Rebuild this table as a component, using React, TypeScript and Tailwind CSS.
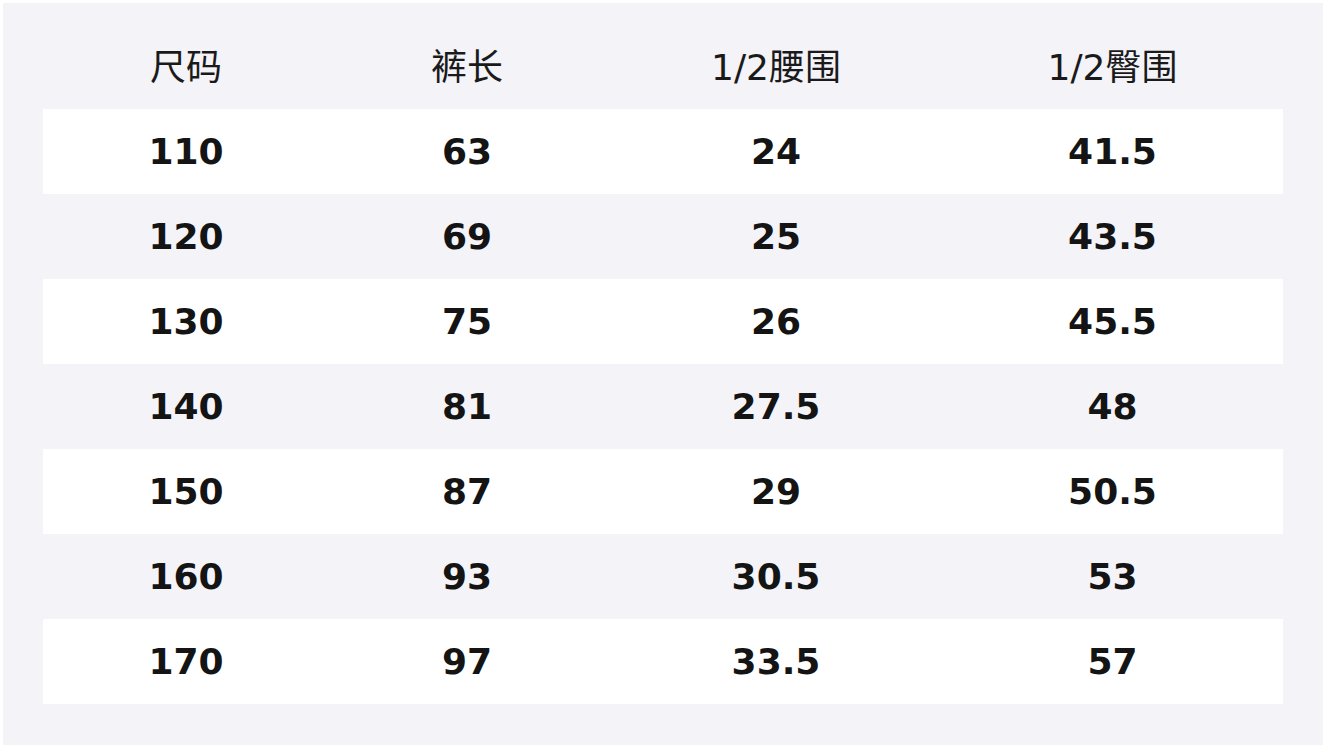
const headers = ["尺码", "裤长", "1/2腰围", "1/2臀围"];

const rows = [
  ["110", "63", "24", "41.5"],
  ["120", "69", "25", "43.5"],
  ["130", "75", "26", "45.5"],
  ["140", "81", "27.5", "48"],
  ["150", "87", "29", "50.5"],
  ["160", "93", "30.5", "53"],
  ["170", "97", "33.5", "57"],
];

const cols = ["w-[286px]", "w-[276px]", "w-[342px]", "w-[336px] pr-[5px]"];

export default function App() {
  return (
    <div className="min-h-screen bg-white p-[3px] font-['DejaVu_Sans','Noto_Sans_CJK_SC',sans-serif] text-[36px]">
      <div className="bg-[#f3f3f8] px-10 pt-[21px] pb-[41px]">
        <div className="flex h-[85px] items-center pt-[2px] text-[#1a1a1a]">
          {headers.map((h, i) => (
            <div key={h} className={`${cols[i]} text-center`}>
              {h}
            </div>
          ))}
        </div>
        {rows.map((r, idx) => (
          <div
            key={r[0]}
            className={`flex h-[85px] items-center font-bold text-[#141414] ${idx % 2 === 0 ? "bg-white" : ""}`}
          >
            {r.map((v, i) => (
              <div key={i} className={`${cols[i]} text-center`}>
                {v}
              </div>
            ))}
          </div>
        ))}
      </div>
    </div>
  );
}
